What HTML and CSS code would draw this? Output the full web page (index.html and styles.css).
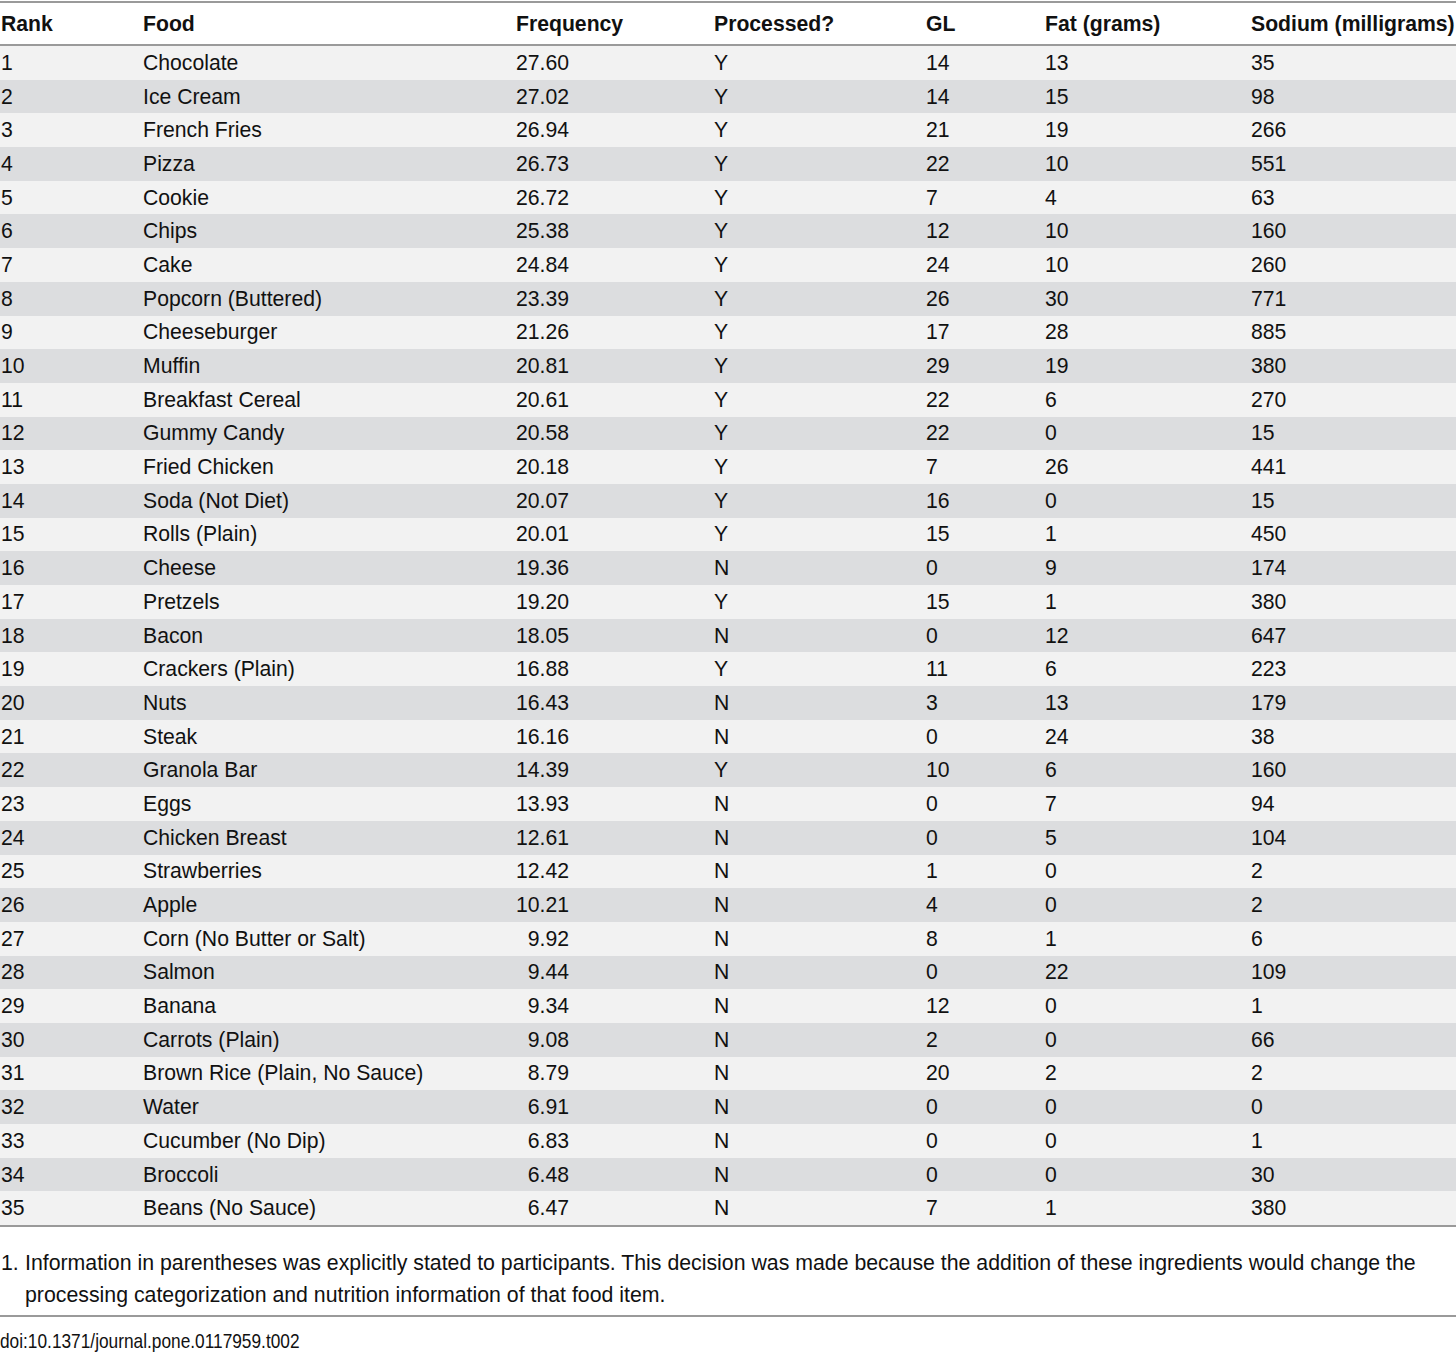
FILE: index.html
```html
<!DOCTYPE html>
<html>
<head>
<meta charset="utf-8">
<link rel="stylesheet" href="styles.css">
</head>
<body>
<div class="page">
<table class="data">
<colgroup>
<col class="c-rank"><col class="c-food"><col class="c-freq"><col class="c-proc"><col class="c-gl"><col class="c-fat"><col class="c-sod">
</colgroup>
<thead>
<tr><th>Rank</th><th>Food</th><th>Frequency</th><th>Processed?</th><th>GL</th><th>Fat (grams)</th><th>Sodium (milligrams)</th></tr>
</thead>
<tbody>
<tr><td>1</td><td>Chocolate</td><td class="num">27.60</td><td>Y</td><td>14</td><td>13</td><td>35</td></tr>
<tr><td>2</td><td>Ice Cream</td><td class="num">27.02</td><td>Y</td><td>14</td><td>15</td><td>98</td></tr>
<tr><td>3</td><td>French Fries</td><td class="num">26.94</td><td>Y</td><td>21</td><td>19</td><td>266</td></tr>
<tr><td>4</td><td>Pizza</td><td class="num">26.73</td><td>Y</td><td>22</td><td>10</td><td>551</td></tr>
<tr><td>5</td><td>Cookie</td><td class="num">26.72</td><td>Y</td><td>7</td><td>4</td><td>63</td></tr>
<tr><td>6</td><td>Chips</td><td class="num">25.38</td><td>Y</td><td>12</td><td>10</td><td>160</td></tr>
<tr><td>7</td><td>Cake</td><td class="num">24.84</td><td>Y</td><td>24</td><td>10</td><td>260</td></tr>
<tr><td>8</td><td>Popcorn (Buttered)</td><td class="num">23.39</td><td>Y</td><td>26</td><td>30</td><td>771</td></tr>
<tr><td>9</td><td>Cheeseburger</td><td class="num">21.26</td><td>Y</td><td>17</td><td>28</td><td>885</td></tr>
<tr><td>10</td><td>Muffin</td><td class="num">20.81</td><td>Y</td><td>29</td><td>19</td><td>380</td></tr>
<tr><td>11</td><td>Breakfast Cereal</td><td class="num">20.61</td><td>Y</td><td>22</td><td>6</td><td>270</td></tr>
<tr><td>12</td><td>Gummy Candy</td><td class="num">20.58</td><td>Y</td><td>22</td><td>0</td><td>15</td></tr>
<tr><td>13</td><td>Fried Chicken</td><td class="num">20.18</td><td>Y</td><td>7</td><td>26</td><td>441</td></tr>
<tr><td>14</td><td>Soda (Not Diet)</td><td class="num">20.07</td><td>Y</td><td>16</td><td>0</td><td>15</td></tr>
<tr><td>15</td><td>Rolls (Plain)</td><td class="num">20.01</td><td>Y</td><td>15</td><td>1</td><td>450</td></tr>
<tr><td>16</td><td>Cheese</td><td class="num">19.36</td><td>N</td><td>0</td><td>9</td><td>174</td></tr>
<tr><td>17</td><td>Pretzels</td><td class="num">19.20</td><td>Y</td><td>15</td><td>1</td><td>380</td></tr>
<tr><td>18</td><td>Bacon</td><td class="num">18.05</td><td>N</td><td>0</td><td>12</td><td>647</td></tr>
<tr><td>19</td><td>Crackers (Plain)</td><td class="num">16.88</td><td>Y</td><td>11</td><td>6</td><td>223</td></tr>
<tr><td>20</td><td>Nuts</td><td class="num">16.43</td><td>N</td><td>3</td><td>13</td><td>179</td></tr>
<tr><td>21</td><td>Steak</td><td class="num">16.16</td><td>N</td><td>0</td><td>24</td><td>38</td></tr>
<tr><td>22</td><td>Granola Bar</td><td class="num">14.39</td><td>Y</td><td>10</td><td>6</td><td>160</td></tr>
<tr><td>23</td><td>Eggs</td><td class="num">13.93</td><td>N</td><td>0</td><td>7</td><td>94</td></tr>
<tr><td>24</td><td>Chicken Breast</td><td class="num">12.61</td><td>N</td><td>0</td><td>5</td><td>104</td></tr>
<tr><td>25</td><td>Strawberries</td><td class="num">12.42</td><td>N</td><td>1</td><td>0</td><td>2</td></tr>
<tr><td>26</td><td>Apple</td><td class="num">10.21</td><td>N</td><td>4</td><td>0</td><td>2</td></tr>
<tr><td>27</td><td>Corn (No Butter or Salt)</td><td class="num">9.92</td><td>N</td><td>8</td><td>1</td><td>6</td></tr>
<tr><td>28</td><td>Salmon</td><td class="num">9.44</td><td>N</td><td>0</td><td>22</td><td>109</td></tr>
<tr><td>29</td><td>Banana</td><td class="num">9.34</td><td>N</td><td>12</td><td>0</td><td>1</td></tr>
<tr><td>30</td><td>Carrots (Plain)</td><td class="num">9.08</td><td>N</td><td>2</td><td>0</td><td>66</td></tr>
<tr><td>31</td><td>Brown Rice (Plain, No Sauce)</td><td class="num">8.79</td><td>N</td><td>20</td><td>2</td><td>2</td></tr>
<tr><td>32</td><td>Water</td><td class="num">6.91</td><td>N</td><td>0</td><td>0</td><td>0</td></tr>
<tr><td>33</td><td>Cucumber (No Dip)</td><td class="num">6.83</td><td>N</td><td>0</td><td>0</td><td>1</td></tr>
<tr><td>34</td><td>Broccoli</td><td class="num">6.48</td><td>N</td><td>0</td><td>0</td><td>30</td></tr>
<tr><td>35</td><td>Beans (No Sauce)</td><td class="num">6.47</td><td>N</td><td>7</td><td>1</td><td>380</td></tr>
</tbody>
</table>
<div class="notes">
<p class="note"><span class="note-num">1.</span><span class="note-text">Information in parentheses was explicitly stated to participants. This decision was made because the addition of these ingredients would change the processing categorization and nutrition information of that food item.</span></p>
</div>
<div class="doi"><span class="doi-text">doi:10.1371/journal.pone.0117959.t002</span></div>
</div>
</body>
</html>
```

FILE: styles.css
```css
html, body {
  margin: 0;
  padding: 0;
  background: #ffffff;
}

body {
  font-family: "Liberation Sans", Arial, Helvetica, sans-serif;
  color: #111111;
}

.page {
  width: 1456px;
}

.data {
  width: 1456px;
  border-collapse: collapse;
  table-layout: fixed;
  font-size: 21.2px;
  border-top: 2px solid #9a9a9a;
  border-bottom: 2px solid #9a9a9a;
  margin-top: 1px;
}

.c-rank { width: 143px; }
.c-food { width: 373px; }
.c-freq { width: 198px; }
.c-proc { width: 212px; }
.c-gl { width: 119px; }
.c-fat { width: 206px; }
.c-sod { width: 205px; }

.data th {
  text-align: left;
  font-weight: bold;
  height: 41px;
  padding: 0;
  border-bottom: 2px solid #9a9a9a;
  vertical-align: middle;
  white-space: nowrap;
}

.data td {
  height: 33.7px;
  padding: 0;
  vertical-align: middle;
  white-space: nowrap;
  line-height: 24px;
}

.data th:first-child,
.data td:first-child {
  padding-left: 1px;
}

.data td.num {
  text-align: right;
  padding-right: 145px;
}

.data tbody tr:nth-child(odd) {
  background: #f2f2f2;
}

.data tbody tr:nth-child(even) {
  background: #dcdddf;
}

.notes {
  border-bottom: 2px solid #9a9a9a;
  padding: 20px 0 4px 0;
}

.note {
  margin: 0;
  display: flex;
  font-size: 21.3px;
  line-height: 32px;
}

.note-num {
  flex: 0 0 24px;
  padding-left: 1px;
}

.note-text {
  flex: 1 1 auto;
  padding-right: 10px;
}

.doi {
  font-size: 21px;
  line-height: 24px;
  padding-top: 12px;
  color: #111111;
  white-space: nowrap;
}

.doi-text {
  display: inline-block;
  transform: scaleX(0.823);
  transform-origin: left center;
}
```
